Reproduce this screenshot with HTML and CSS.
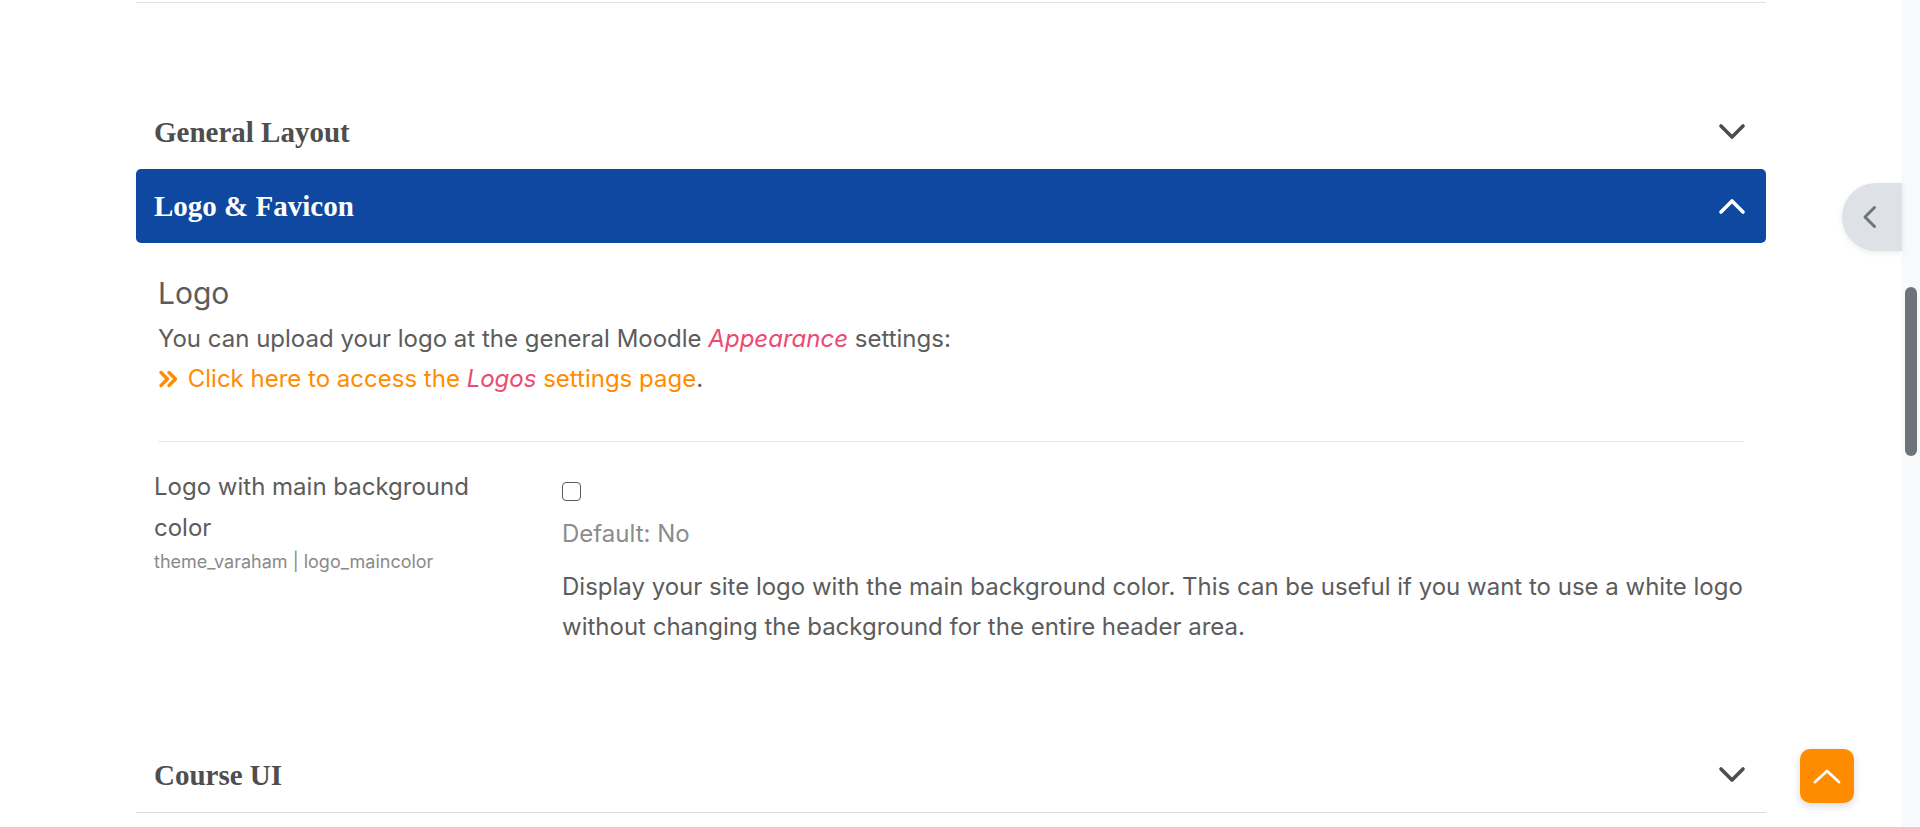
FILE: index.html
```html
<!DOCTYPE html>
<html lang="en">
<head>
<meta charset="utf-8">
<title>Theme settings</title>
<link rel="stylesheet" href="styles.css">
</head>
<body>
<div class="page">
  <main class="main">
    <div class="container">
      <div class="top-rule"></div>

      <section class="acc">
        <div class="acc-head">
          <h2 class="acc-title">General Layout</h2>
          <svg class="chev" viewBox="0 0 28 18" width="28" height="18"><path d="M3 3 L14 14 L25 3"/></svg>
        </div>
      </section>

      <section class="acc">
        <div class="acc-head active">
          <h2 class="acc-title">Logo &amp; Favicon</h2>
          <svg class="chev" viewBox="0 0 28 18" width="28" height="18"><path d="M3 15 L14 4 L25 15"/></svg>
        </div>
        <div class="acc-body">
          <div class="intro">
            <h3 class="intro-title">Logo</h3>
            <p class="intro-text">You can upload your logo at the general Moodle <em class="pink">Appearance</em> settings:<br><a class="link" href="#"><svg class="dbl" viewBox="0 0 21 18" width="21" height="18"><path d="M3 2.5 L9.5 9 L3 15.5 M11 2.5 L17.5 9 L11 15.5"/></svg> Click here to access the <em class="pink">Logos</em> settings page</a>.</p>
          </div>
          <div class="sep"></div>
          <div class="setting">
            <div class="setting-label">
              <div class="label">Logo with main background color</div>
              <div class="setting-id">theme_varaham | logo_maincolor</div>
            </div>
            <div class="setting-control">
              <span class="checkbox"></span>
              <div class="default">Default: No</div>
              <div class="desc">Display your site logo with the main background color. This can be useful if you want to use a white logo without changing the background for the entire header area.</div>
            </div>
          </div>
        </div>
      </section>

      <section class="acc">
        <div class="acc-head bordered">
          <h2 class="acc-title">Course UI</h2>
          <svg class="chev" viewBox="0 0 28 18" width="28" height="18"><path d="M3 3 L14 14 L25 3"/></svg>
        </div>
      </section>
    </div>
  </main>
  <div class="scrollbar"><div class="thumb"></div></div>
</div>

<button class="drawer-tab" aria-label="Open drawer"><svg viewBox="0 0 16 24" width="16" height="24"><path d="M12.5 2.5 L3 12 L12.5 21.5"/></svg></button>
<button class="to-top" aria-label="Back to top"><svg viewBox="0 0 28 16" width="28" height="16"><path d="M2 14 L14 3 L26 14"/></svg></button>
</body>
</html>
```

FILE: styles.css
```css
* { box-sizing: border-box; }
html, body { margin: 0; padding: 0; height: 100%; overflow: hidden; background: #fff; }
body { font-family: "Inter", "Noto Sans", sans-serif; color: #5c5c5c; }

.page { display: flex; height: 827px; }
.main { flex: 1; min-width: 0; }
.scrollbar { width: 18px; background: #f8f9fa; position: relative; }
.thumb { position: absolute; left: 3px; top: 287px; width: 12px; height: 169px; border-radius: 6px; background: #6c737b; }

.container { width: 1630px; margin-left: 136px; padding-top: 2px; }
.top-rule { height: 1px; background: #e2e2ec; margin-bottom: 92px; }

.acc-head { height: 74px; display: flex; align-items: center; justify-content: space-between; padding: 0 20px 0 18px; }
.acc-head.active { background: #0f48a1; border-radius: 5px; }
.acc-head.bordered { border-bottom: 1px solid #dcdcdc; height: 75px; }
.acc-title { margin: 0; font-family: "Liberation Serif", "Times New Roman", serif; font-weight: 700; font-size: 29px; color: #4e4e4e; letter-spacing: 0; }
.active .acc-title { color: #fff; }
.chev { display: block; }
.chev path { fill: none; stroke: #4d4d4d; stroke-width: 3.6; stroke-linecap: round; stroke-linejoin: round; }
.active .chev path { stroke: #fff; }

.acc-body { padding: 33px 22px 91px; }
.intro-title { margin: 0; font-size: 30px; line-height: 34px; font-weight: 400; color: #5c5c5c; }
.intro-text { margin: 9px 0 0; font-size: 24px; line-height: 40px; }
.pink { color: #ec4a6f; font-style: italic; }
.link { color: #ff8c00; text-decoration: none; }
.dbl { vertical-align: -1px; margin-right: 2px; }
.dbl path { fill: none; stroke: #ff8c00; stroke-width: 3.4; stroke-linecap: round; stroke-linejoin: round; }

.sep { height: 1px; background: #e6e6e6; margin-top: 42px; }

.setting { display: grid; grid-template-columns: 408px 1fr; margin: 24px 0 0 -4px; }
.label { font-size: 24px; line-height: 41px; width: 330px; color: #5c5c5c; }
.setting-id { font-size: 18px; line-height: 25px; color: #8a8a8a; margin-top: 1px; }
.setting-control { padding-top: 16px; }
.checkbox { display: block; width: 19px; height: 19px; border: 1.5px solid #5a5a5a; border-radius: 4px; }
.default { font-size: 24px; line-height: 40px; color: #8c8c8c; margin-top: 13px; }
.desc { font-size: 24px; line-height: 40px; margin-top: 13px; color: #5c5c5c; }

.drawer-tab { position: fixed; top: 183px; right: 18px; width: 60px; height: 68px; border: 0; padding: 0 0 0 20px; border-radius: 34px 0 0 34px; background: #dee1e6; box-shadow: 0 2px 6px rgba(0,0,0,0.08); display: flex; align-items: center; }
.drawer-tab path { fill: none; stroke: #6c757d; stroke-width: 3; stroke-linecap: round; stroke-linejoin: round; }
.to-top { position: fixed; left: 1800px; top: 749px; width: 54px; height: 54px; border: 0; padding: 0; border-radius: 10px; background: #ff8c00; box-shadow: 0 3px 8px rgba(0,0,0,0.15); display: flex; align-items: center; justify-content: center; }
.to-top path { fill: none; stroke: #fff; stroke-width: 2.8; stroke-linecap: round; stroke-linejoin: round; }
```
